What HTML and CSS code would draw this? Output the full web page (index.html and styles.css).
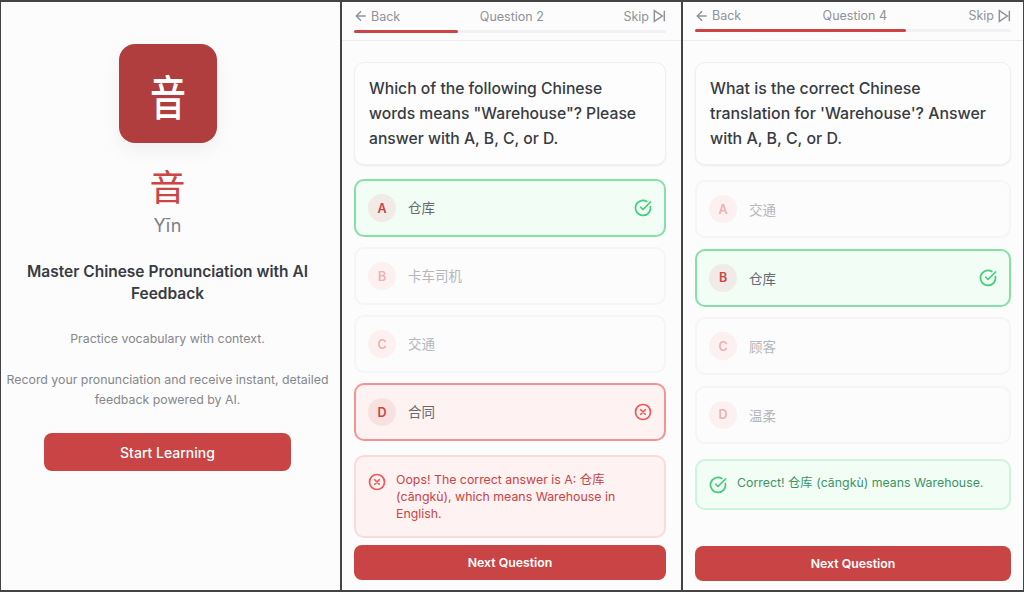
FILE: index.html
```html
<!DOCTYPE html>
<html lang="en">
<head>
    <meta charset="UTF-8">
    <meta name="viewport" content="width=device-width, initial-scale=1.0">
    <title>Yin</title>
    <link rel="stylesheet" href="styles.css">
</head>
<body>
    <!-- Welcome screen -->
    <section class="screen welcome">
        <div class="logo"><span class="logo-char">音</span></div>
        <div class="hanzi">音</div>
        <div class="pinyin">Yīn</div>
        <h1>Master Chinese Pronunciation with AI Feedback</h1>
        <p class="intro">Practice vocabulary with context.</p>
        <p class="intro">Record your pronunciation and receive instant, detailed feedback powered by AI.</p>
        <button class="primary start">Start Learning</button>
    </section>

    <!-- Question 2, wrong answer -->
    <section class="screen quiz quiz-wrong">
        <header class="top">
            <div class="nav">
                <span class="nav-link">
                    <svg class="nav-icon" viewBox="0 0 24 24"><path d="M19 12H5M12 19l-7-7 7-7"/></svg>
                    Back
                </span>
                <span class="nav-title">Question 2</span>
                <span class="nav-link">
                    Skip
                    <svg class="nav-icon" viewBox="0 0 24 24"><path d="M5 4l12 8-12 8zM20 4v16"/></svg>
                </span>
            </div>
            <div class="progress"><div class="progress-fill" style="width: 33.3%"></div></div>
        </header>
        <main class="body">
            <div class="question">Which of the following Chinese words means "Warehouse"? Please answer with A, B, C, or D.</div>
            <div class="options">
                <div class="option correct">
                    <span class="letter">A</span><span class="word">仓库</span>
                    <svg class="state-icon" viewBox="0 0 24 24"><path d="M21.8 10A10 10 0 1 1 17 3.3"/><path d="M9 11l3 3L22 4"/></svg>
                </div>
                <div class="option muted"><span class="letter">B</span><span class="word">卡车司机</span></div>
                <div class="option muted"><span class="letter">C</span><span class="word">交通</span></div>
                <div class="option wrong">
                    <span class="letter">D</span><span class="word">合同</span>
                    <svg class="state-icon" viewBox="0 0 24 24"><circle cx="12" cy="12" r="10"/><path d="M15 9l-6 6M9 9l6 6"/></svg>
                </div>
            </div>
            <div class="feedback bad">
                <svg class="state-icon" viewBox="0 0 24 24"><circle cx="12" cy="12" r="10"/><path d="M15 9l-6 6M9 9l6 6"/></svg>
                <span>Oops! The correct answer is A: 仓库 (cāngkù), which means Warehouse in English.</span>
            </div>
            <button class="primary next">Next Question</button>
        </main>
    </section>

    <!-- Question 4, right answer -->
    <section class="screen quiz quiz-right">
        <header class="top">
            <div class="nav">
                <span class="nav-link">
                    <svg class="nav-icon" viewBox="0 0 24 24"><path d="M19 12H5M12 19l-7-7 7-7"/></svg>
                    Back
                </span>
                <span class="nav-title">Question 4</span>
                <span class="nav-link">
                    Skip
                    <svg class="nav-icon" viewBox="0 0 24 24"><path d="M5 4l12 8-12 8zM20 4v16"/></svg>
                </span>
            </div>
            <div class="progress"><div class="progress-fill" style="width: 66.7%"></div></div>
        </header>
        <main class="body">
            <div class="question">What is the correct Chinese translation for 'Warehouse'? Answer with A, B, C, or D.</div>
            <div class="options">
                <div class="option muted"><span class="letter">A</span><span class="word">交通</span></div>
                <div class="option correct">
                    <span class="letter">B</span><span class="word">仓库</span>
                    <svg class="state-icon" viewBox="0 0 24 24"><path d="M21.8 10A10 10 0 1 1 17 3.3"/><path d="M9 11l3 3L22 4"/></svg>
                </div>
                <div class="option muted"><span class="letter">C</span><span class="word">顾客</span></div>
                <div class="option muted"><span class="letter">D</span><span class="word">温柔</span></div>
            </div>
            <div class="feedback good">
                <svg class="state-icon" viewBox="0 0 24 24"><path d="M21.8 10A10 10 0 1 1 17 3.3"/><path d="M9 11l3 3L22 4"/></svg>
                <span>Correct! 仓库 (cāngkù) means Warehouse.</span>
            </div>
            <button class="primary next">Next Question</button>
        </main>
    </section>
</body>
</html>
```

FILE: styles.css
```css
* {
    box-sizing: border-box;
}
body {
    margin: 0;
    width: 1024px;
    height: 592px;
    display: grid;
    grid-template-columns: 341px 341px 342px;
    font-family: Inter, "Noto Sans CJK SC", sans-serif;
    background-color: #fcfcfd;
    color: #383b42;
    overflow: hidden;
}
.screen {
    height: 592px;
    border: 1px solid #444;
    border-top-width: 2px;
    border-bottom-width: 2px;
    background-color: #fcfcfd;
    display: flex;
    flex-direction: column;
}

/* Welcome screen */
.welcome {
    align-items: center;
    text-align: center;
    padding: 42px 7px 0 1px;
}
.logo {
    width: 98px;
    height: 99px;
    margin-left: 1px;
    border-radius: 16px;
    background-color: #b03e3e;
    color: white;
    font-size: 36px;
    font-weight: 500;
    display: flex;
    align-items: center;
    justify-content: center;
    box-shadow: 0 8px 20px rgba(0, 0, 0, 0.05);
}
/* the glyph in the logo is taller than it is wide */
.logo-char {
    display: block;
    transform: scaleY(1.3);
}
.hanzi {
    margin-top: 20px;
    font-size: 36px;
    line-height: 50px;
    color: #cc4444;
}
.pinyin {
    margin-top: 1px;
    font-size: 18px;
    line-height: 24px;
    color: #7b7f87;
}
h1 {
    margin: 23px 0 3px 0;
    padding: 0 20px;
    font-size: 15.5px;
    font-weight: 600;
    line-height: 22px;
}
.intro {
    margin: 21px 0 0 0;
    font-size: 12.35px;
    line-height: 20px;
    color: #85878b;
}
.primary {
    border: none;
    border-radius: 8px;
    background-color: #c94444;
    color: white;
    font-family: inherit;
}
.start {
    width: 247px;
    height: 38px;
    margin-top: 23px;
    font-size: 14px;
    font-weight: 500;
}

/* Quiz header */
.top {
    height: 39px;
    padding: 0 12px;
    border-bottom: 1px solid #ececee;
}
.quiz-wrong .top {
    padding-right: 15px;
}
.nav {
    height: 28px;
    margin: 0 -1px;
    display: flex;
    align-items: center;
    justify-content: space-between;
    color: #8f9298;
    font-size: 12.5px;
}
.quiz-right .nav {
    height: 27px;
}
.nav-link {
    display: flex;
    align-items: center;
    gap: 2px;
}
.nav-icon {
    width: 16px;
    height: 16px;
    fill: none;
    stroke: currentColor;
    stroke-width: 2.2;
}
.progress {
    height: 3px;
    border-radius: 2px;
    background-color: #f1f1f3;
}
.progress-fill {
    height: 3px;
    border-radius: 2px;
    background-color: #cc4444;
}

/* Quiz body */
.body {
    flex: 1;
    padding: 21px 12px 10px 12px;
    display: flex;
    flex-direction: column;
}
.quiz-wrong .body {
    padding-right: 15px;
}
.quiz-right .body {
    padding-bottom: 9px;
}
.question {
    height: 103px;
    padding: 13px 14px;
    border: 1px solid #f0f0f2;
    border-radius: 10px;
    background-color: #fdfdfe;
    box-shadow: 0 1px 2px rgba(0, 0, 0, 0.07);
    font-size: 15.7px;
    font-weight: 500;
    line-height: 25px;
}
.quiz-right .question {
    font-size: 15.9px;
}
.options {
    margin-top: 14px;
    display: flex;
    flex-direction: column;
    gap: 10px;
}
.quiz-right .options {
    margin-top: 15px;
    gap: 10.5px;
}
.option {
    height: 58px;
    padding: 0 12px;
    display: flex;
    align-items: center;
    border: 2px solid #f5f5f6;
    border-radius: 10px;
    font-size: 13.5px;
    color: #666a70;
}
.letter {
    width: 28px;
    height: 28px;
    margin-right: 12px;
    border-radius: 50%;
    display: flex;
    align-items: center;
    justify-content: center;
    font-size: 12.5px;
    font-weight: 600;
    color: #cc4444;
}
.word {
    flex: 1;
}
.quiz-wrong .word {
    padding-bottom: 2px;
}
.state-icon {
    width: 18px;
    height: 18px;
    flex: none;
    fill: none;
    stroke: currentColor;
    stroke-width: 2.3;
    stroke-linecap: round;
    stroke-linejoin: round;
}
.option .state-icon {
    color: #3fcf78;
}
.option.correct {
    background-color: #f2fdf6;
    border-color: #84e0a6;
}
.option.correct .letter {
    background-color: #f0ebe6;
}
.option.wrong {
    background-color: #fef2f2;
    border-color: #f59393;
}
.option.wrong .letter {
    background-color: #f8e2e1;
}
.option.wrong .state-icon {
    color: #ee5a5a;
}
.option.muted {
    color: #b5b7bb;
}
.option.muted .letter {
    background-color: #fdf0f0;
    color: #eeb0b0;
}
.feedback {
    margin-top: 14px;
    padding: 13.5px 12px 14px 12px;
    display: flex;
    gap: 10px;
    border: 2px solid;
    border-radius: 10px;
    font-size: 12.35px;
    line-height: 17px;
}
.quiz-right .feedback {
    margin-top: 15px;
}
.feedback .state-icon {
    margin-top: 2px;
}
.feedback.bad {
    background-color: #fef2f2;
    border-color: #fddada;
    color: #c94444;
}
.feedback.bad .state-icon {
    color: #ee5a5a;
}
.feedback.good {
    background-color: #f2fdf6;
    border-color: #cdf5db;
    color: #3d9463;
}
.feedback.good .state-icon {
    color: #3fcf78;
}
.next {
    height: 35px;
    margin-top: auto;
    font-size: 12.3px;
    font-weight: 600;
}
```
